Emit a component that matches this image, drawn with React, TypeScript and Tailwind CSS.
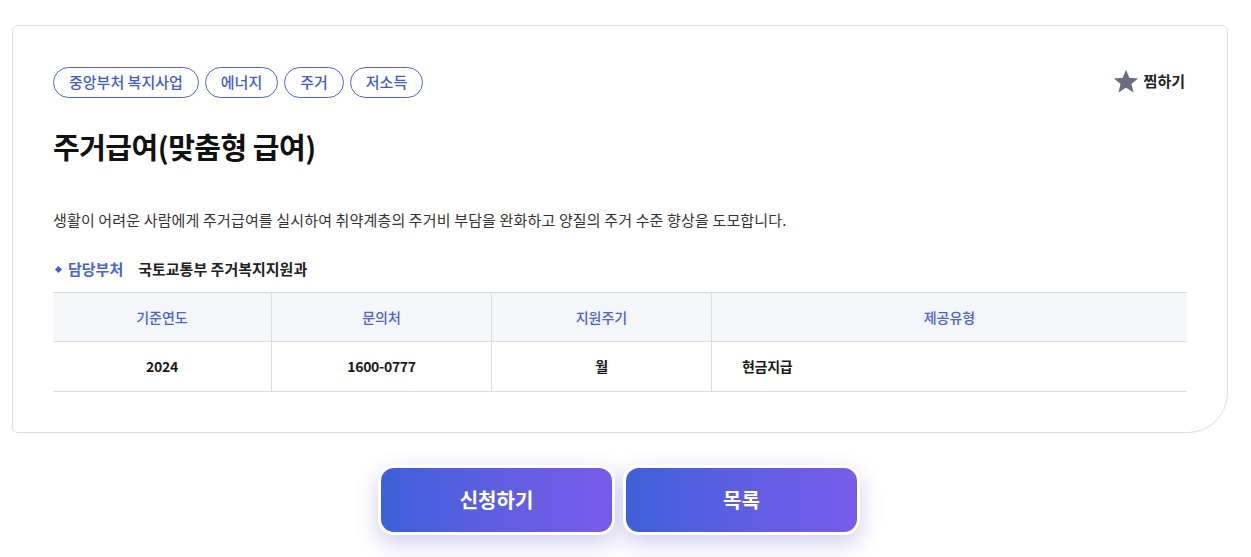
const tags = ["중앙부처 복지사업", "에너지", "주거", "저소득"];

const columns = [
  { label: "기준연도", value: "2024", width: "w-[219px]", align: "text-center" },
  { label: "문의처", value: "1600-0777", width: "w-[220px]", align: "text-center" },
  { label: "지원주기", value: "월", width: "w-[220px]", align: "text-center" },
  { label: "제공유형", value: "현금지급", width: "flex-1", align: "text-left pl-[30px]" },
];

const StarIcon = () => (
  <svg viewBox="0 0 24 24" className="size-[26px]" fill="#6b6d82">
    <path d="M12 1.5l3.1 7.6 8.1.5-6.2 5.2 2 7.9L12 18.3l-7 4.4 2-7.9L.8 9.6l8.1-.5z" />
  </svg>
);

export default function App() {
  return (
    <div
      className="min-h-[557px] bg-white pt-[25px]"
      style={{ fontFamily: '"Noto Sans CJK KR", "Noto Sans", sans-serif' }}
    >
      <div className="ml-[12px] w-[1216px] rounded-[6px] rounded-br-[40px] border border-[#dedede] bg-white px-[40px] pt-[41px] pb-[40px]">
        <div className="flex items-start justify-between">
          <div className="flex gap-[6px]">
            {tags.map((t) => (
              <span
                key={t}
                className="flex h-[31px] items-center rounded-full border border-[#4a68db] px-[15px] text-[15px] font-medium text-[#3f5cd1]"
              >
                {t}
              </span>
            ))}
          </div>
          <button className="mr-[2px] flex items-center gap-[5px] pt-[1px] text-[15px] font-bold text-[#222]">
            <StarIcon />
            찜하기
          </button>
        </div>

        <h1 className="mt-[28px] text-[29px] leading-[40px] font-bold tracking-[-0.5px] text-[#111]">
          주거급여(맞춤형 급여)
        </h1>

        <p className="mt-[42px] text-[15px] leading-[24px] tracking-[0.15px] text-[#333]">
          생활이 어려운 사람에게 주거급여를 실시하여 취약계층의 주거비 부담을 완화하고 양질의 주거 수준 향상을 도모합니다.
        </p>

        <div className="mt-[25px] flex items-center text-[15px] leading-[24px]">
          <span className="ml-[3px] mr-[7px] size-[5px] rotate-45 bg-[#3f5cd1]" />
          <span className="font-bold text-[#4a63d6]">담당부처</span>
          <span className="ml-[15px] font-bold text-[#222]">국토교통부 주거복지지원과</span>
        </div>

        <div className="mt-[11px] border-t border-[#dcdde2]">
          <div className="flex h-[49px] border-b border-[#dcdde2] bg-[#f5f6fa]">
            {columns.map((c, i) => (
              <div
                key={c.label}
                className={`${c.width} flex items-center justify-center text-[14px] font-medium text-[#4a63d6] ${i < 3 ? "border-r border-[#dcdde2]" : ""}`}
              >
                {c.label}
              </div>
            ))}
          </div>
          <div className="flex h-[50px] border-b border-[#dcdde2]">
            {columns.map((c, i) => (
              <div
                key={c.label}
                className={`${c.width} ${c.align} flex items-center ${i < 3 ? "justify-center border-r border-[#dcdde2]" : ""} text-[14px] font-bold tracking-[-0.3px] text-[#1a1a1a]`}
              >
                {c.value}
              </div>
            ))}
          </div>
        </div>
      </div>

      <div className="mt-[32px] flex justify-center gap-[8px] pr-[13px]">
        {["신청하기", "목록"].map((b) => (
          <button
            key={b}
            className="h-[70px] w-[237px] rounded-[16px] border-[3px] border-white bg-gradient-to-r from-[#3d60d8] to-[#785ce9] text-[20px] font-bold text-white shadow-[0_8px_22px_rgba(95,90,200,0.3)]"
          >
            {b}
          </button>
        ))}
      </div>
    </div>
  );
}
